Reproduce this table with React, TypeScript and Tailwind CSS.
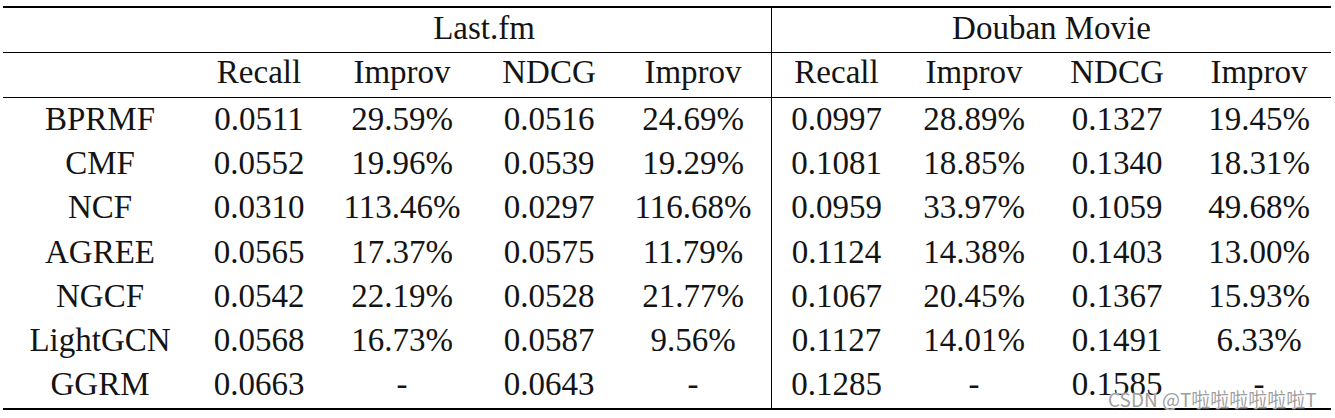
const rows: [string, string[]][] = [
  ["BPRMF", ["0.0511", "29.59%", "0.0516", "24.69%", "0.0997", "28.89%", "0.1327", "19.45%"]],
  ["CMF", ["0.0552", "19.96%", "0.0539", "19.29%", "0.1081", "18.85%", "0.1340", "18.31%"]],
  ["NCF", ["0.0310", "113.46%", "0.0297", "116.68%", "0.0959", "33.97%", "0.1059", "49.68%"]],
  ["AGREE", ["0.0565", "17.37%", "0.0575", "11.79%", "0.1124", "14.38%", "0.1403", "13.00%"]],
  ["NGCF", ["0.0542", "22.19%", "0.0528", "21.77%", "0.1067", "20.45%", "0.1367", "15.93%"]],
  ["LightGCN", ["0.0568", "16.73%", "0.0587", "9.56%", "0.1127", "14.01%", "0.1491", "6.33%"]],
  ["GGRM", ["0.0663", "-", "0.0643", "-", "0.1285", "-", "0.1585", "-"]],
]

const widths = [194, 124, 162, 132, 156, 130, 146, 140, 144]
const metrics = ["Recall", "Improv", "NDCG", "Improv", "Recall", "Improv", "NDCG", "Improv"]

// row height + top padding, tuned so baselines follow the ~44.2px pitch
const rowCls = [
  "h-[44px] pt-[5px]",
  "h-[44px] pt-[5px]",
  "h-[44px] pt-[5px]",
  "h-[44px] pt-[6px]",
  "h-[44px] pt-[6px]",
  "h-[44px] pt-[6px]",
  "h-[48px] pt-[6px] border-b-2 border-black",
]

export default function App() {
  return (
    <div className="relative h-[418px] w-[1335px] overflow-hidden bg-white pl-[3px] pt-[6px] font-serif text-[33px] text-[#141414]">
      <table className="table-fixed border-separate border-spacing-0 [font-family:'Liberation_Serif',serif]">
        <colgroup>
          {widths.map((w, i) => (
            <col key={i} style={{ width: w }} />
          ))}
        </colgroup>
        <thead>
          <tr>
            <th className="h-[47px] border-t-2 border-b border-black p-0" />
            <th colSpan={4} className="h-[47px] border-t-2 border-b border-black px-0 pt-[4px] pb-0 text-center align-top leading-none font-normal">
              Last.fm
            </th>
            <th colSpan={4} className="h-[47px] border-t-2 border-b border-l border-black px-0 pt-[4px] pb-0 text-center align-top leading-none font-normal">
              Douban Movie
            </th>
          </tr>
          <tr>
            <th className="h-[45px] border-b border-black p-0" />
            {metrics.map((m, i) => (
              <th
                key={i}
                className={
                  i === 4
                    ? "h-[45px] border-b border-l border-black px-0 pt-[3px] pb-0 text-center align-top leading-none font-normal"
                    : "h-[45px] border-b border-black px-0 pt-[3px] pb-0 text-center align-top leading-none font-normal"
                }
              >
                {m}
              </th>
            ))}
          </tr>
        </thead>
        <tbody>
          {rows.map(([name, vals], r) => (
            <tr key={name}>
              <td className={rowCls[r] + " px-0 pb-0 text-center align-top leading-none"}>{name}</td>
              {vals.map((v, i) => (
                <td
                  key={i}
                  className={
                    rowCls[r] +
                    (i === 4 ? " border-l border-black" : "") +
                    " px-0 pb-0 text-center align-top leading-none"
                  }
                >
                  {v}
                </td>
              ))}
            </tr>
          ))}
        </tbody>
      </table>
      <div className="absolute left-[1108px] top-[389px] text-[19px] leading-none text-[#a0a0a0] [font-family:'Noto_Sans_CJK_SC',sans-serif] [text-shadow:0_0_2px_#fff,0_0_1px_#fff]">
        CSDN @T啦啦啦啦啦啦T
      </div>
    </div>
  )
}
